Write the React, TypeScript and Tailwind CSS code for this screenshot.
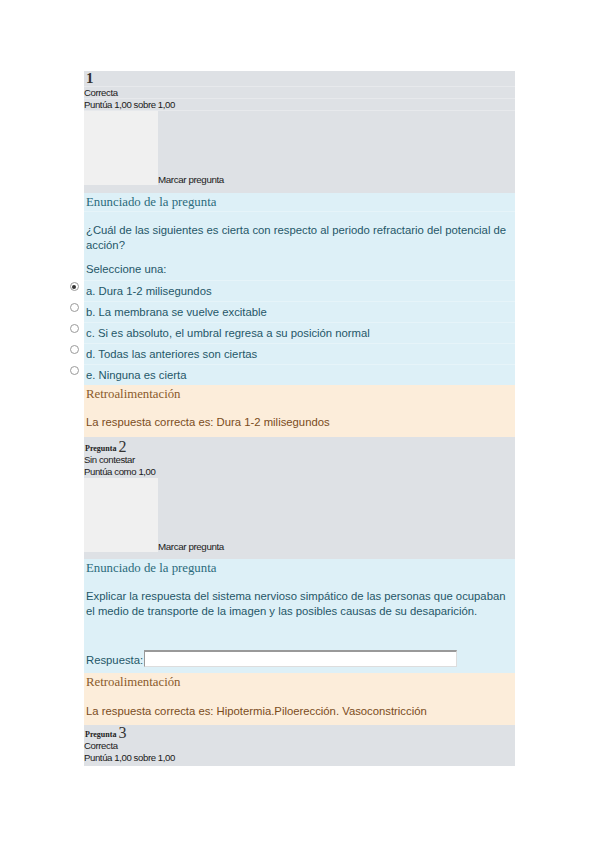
import React from 'react';

const sans = 'font-["Liberation_Sans","Open_Sans",sans-serif]';
const serif = 'font-["Liberation_Serif","DejaVu_Serif",serif]';
const small = `${sans} text-[9.6px] leading-[12px] text-[#1a1a1a] tracking-[-0.4px]`;
const body = `${sans} text-[11.3px] text-[#1f5768]`;

const GrayRow: React.FC<{ children: React.ReactNode; className?: string }> = ({ children, className = '' }) => (
  <div className={`border-b border-[#e7e9ec] ${className}`}>{children}</div>
);

const Radio: React.FC<{ checked?: boolean }> = ({ checked }) => (
  <div className="w-[20px] shrink-0 bg-white flex justify-center pt-[2px]">
    <span className="w-[9px] h-[9px] rounded-full border border-[#9a9a9a] bg-white flex items-center justify-center">
      {checked && <span className="w-[4px] h-[4px] rounded-full bg-[#333]" />}
    </span>
  </div>
);

const Placeholder: React.FC = () => (
  <div className="flex items-end">
    <div className="w-[74px] h-[74px] bg-[#f0f0f0]" />
    <span className={`${sans} text-[9.8px] leading-[10px] text-[#1a1a1a] tracking-[-0.4px]`}>Marcar pregunta</span>
  </div>
);

const options = [
  'a. Dura 1-2 milisegundos',
  'b. La membrana se vuelve excitable',
  'c. Si es absoluto, el umbral regresa a su posición normal',
  'd. Todas las anteriores son ciertas',
  'e. Ninguna es cierta',
];

const App: React.FC = () => {
  return (
    <div className="w-[599px] min-h-[848px] bg-white pt-[71px]">
      <div className="ml-[84px] w-[431px]">
        {/* Pregunta 1 info */}
        <div className="bg-[#dee1e5] pb-[8px]">
          <GrayRow className="h-[16px] flex items-end">
            <span className={`${serif} font-bold text-[15px] leading-[15px] text-[#333] pl-[2px]`}>1</span>
          </GrayRow>
          <GrayRow className={`${small} h-[12px]`}>Correcta</GrayRow>
          <GrayRow className={`${small} h-[12px]`}>Puntúa 1,00 sobre 1,00</GrayRow>
          <Placeholder />
        </div>

        {/* Enunciado 1 */}
        <div className="bg-[#ddf0f7]">
          <div className={`${serif} text-[12.8px] leading-[18px] text-[#2b6b7c] pl-[2px] border-b border-[#e6f4f9]`}>Enunciado de la pregunta</div>
          <div className={`${body} leading-[15px] pl-[2px] pt-[11px] pb-[7px]`}>
            ¿Cuál de las siguientes es cierta con respecto al periodo refractario del potencial de acción?
          </div>
          <div className={`${body} leading-[19px] pl-[2px] pb-[1px]`}>Seleccione una:</div>
          {options.map((o, i) => (
            <div key={o} className="flex -ml-[20px] h-[21px]">
              <Radio checked={i === 0} />
              <div className={`${body} flex-1 leading-[21px] pl-[2px] border-t border-[#e6f4f9]`}>{o}</div>
            </div>
          ))}
        </div>

        {/* Retro 1 */}
        <div className="bg-[#fcedda] h-[52px]">
          <div className={`${serif} text-[12.8px] leading-[18px] text-[#8a5b2b] pl-[2px]`}>Retroalimentación</div>
          <div className={`${sans} text-[11.3px] leading-[15px] pl-[2px] pt-[12px] text-[#7a4c1c]`}>La respuesta correcta es: Dura 1-2 milisegundos</div>
        </div>

        {/* Pregunta 2 info */}
        <div className="bg-[#dee1e5] pb-[7px]">
          <div className="h-[17px] flex items-end pl-[1px]">
            <span className={`${serif} font-bold text-[8px] leading-[10px] text-[#222]`}>Pregunta</span>
            <span className={`${serif} text-[16px] leading-[14px] text-[#333] ml-[2px]`}>2</span>
          </div>
          <div className={`${small} h-[12px]`}>Sin contestar</div>
          <div className={`${small} h-[12px]`}>Puntúa como 1,00</div>
          <Placeholder />
        </div>

        {/* Enunciado 2 */}
        <div className="bg-[#ddf0f7] h-[114px] flex flex-col">
          <div className={`${serif} text-[12.8px] leading-[18px] text-[#2b6b7c] pl-[2px]`}>Enunciado de la pregunta</div>
          <div className={`${body} leading-[15px] pl-[2px] pt-[12px]`}>
            Explicar la respuesta del sistema nervioso simpático de las personas que ocupaban el medio de transporte de la imagen y las posibles causas de su desaparición.
          </div>
          <div className="flex items-end mt-auto pb-[6px] pl-[2px]">
            <span className={`${body} leading-[13px]`}>Respuesta:</span>
            <div className="w-[313px] h-[17px] bg-white border-t-2 border-l border-[#999] border-r border-b border-r-[#ddd] border-b-[#ddd] ml-[1px]" />
          </div>
        </div>

        {/* Retro 2 */}
        <div className="bg-[#fcedda] h-[52px]">
          <div className={`${serif} text-[12.8px] leading-[18px] text-[#8a5b2b] pl-[2px]`}>Retroalimentación</div>
          <div className={`${sans} text-[11.3px] leading-[16px] pl-[2px] pt-[12px] text-[#7a4c1c]`}>La respuesta correcta es: Hipotermia.Piloerección. Vasoconstricción</div>
        </div>

        {/* Pregunta 3 info */}
        <div className="bg-[#dee1e5] h-[41px]">
          <div className="h-[15px] flex items-end pl-[1px]">
            <span className={`${serif} font-bold text-[8px] leading-[10px] text-[#222]`}>Pregunta</span>
            <span className={`${serif} text-[16px] leading-[14px] text-[#333] ml-[2px]`}>3</span>
          </div>
          <div className={`${small} h-[12px]`}>Correcta</div>
          <div className={`${small} h-[12px]`}>Puntúa 1,00 sobre 1,00</div>
        </div>
      </div>
    </div>
  );
};

export default App;
